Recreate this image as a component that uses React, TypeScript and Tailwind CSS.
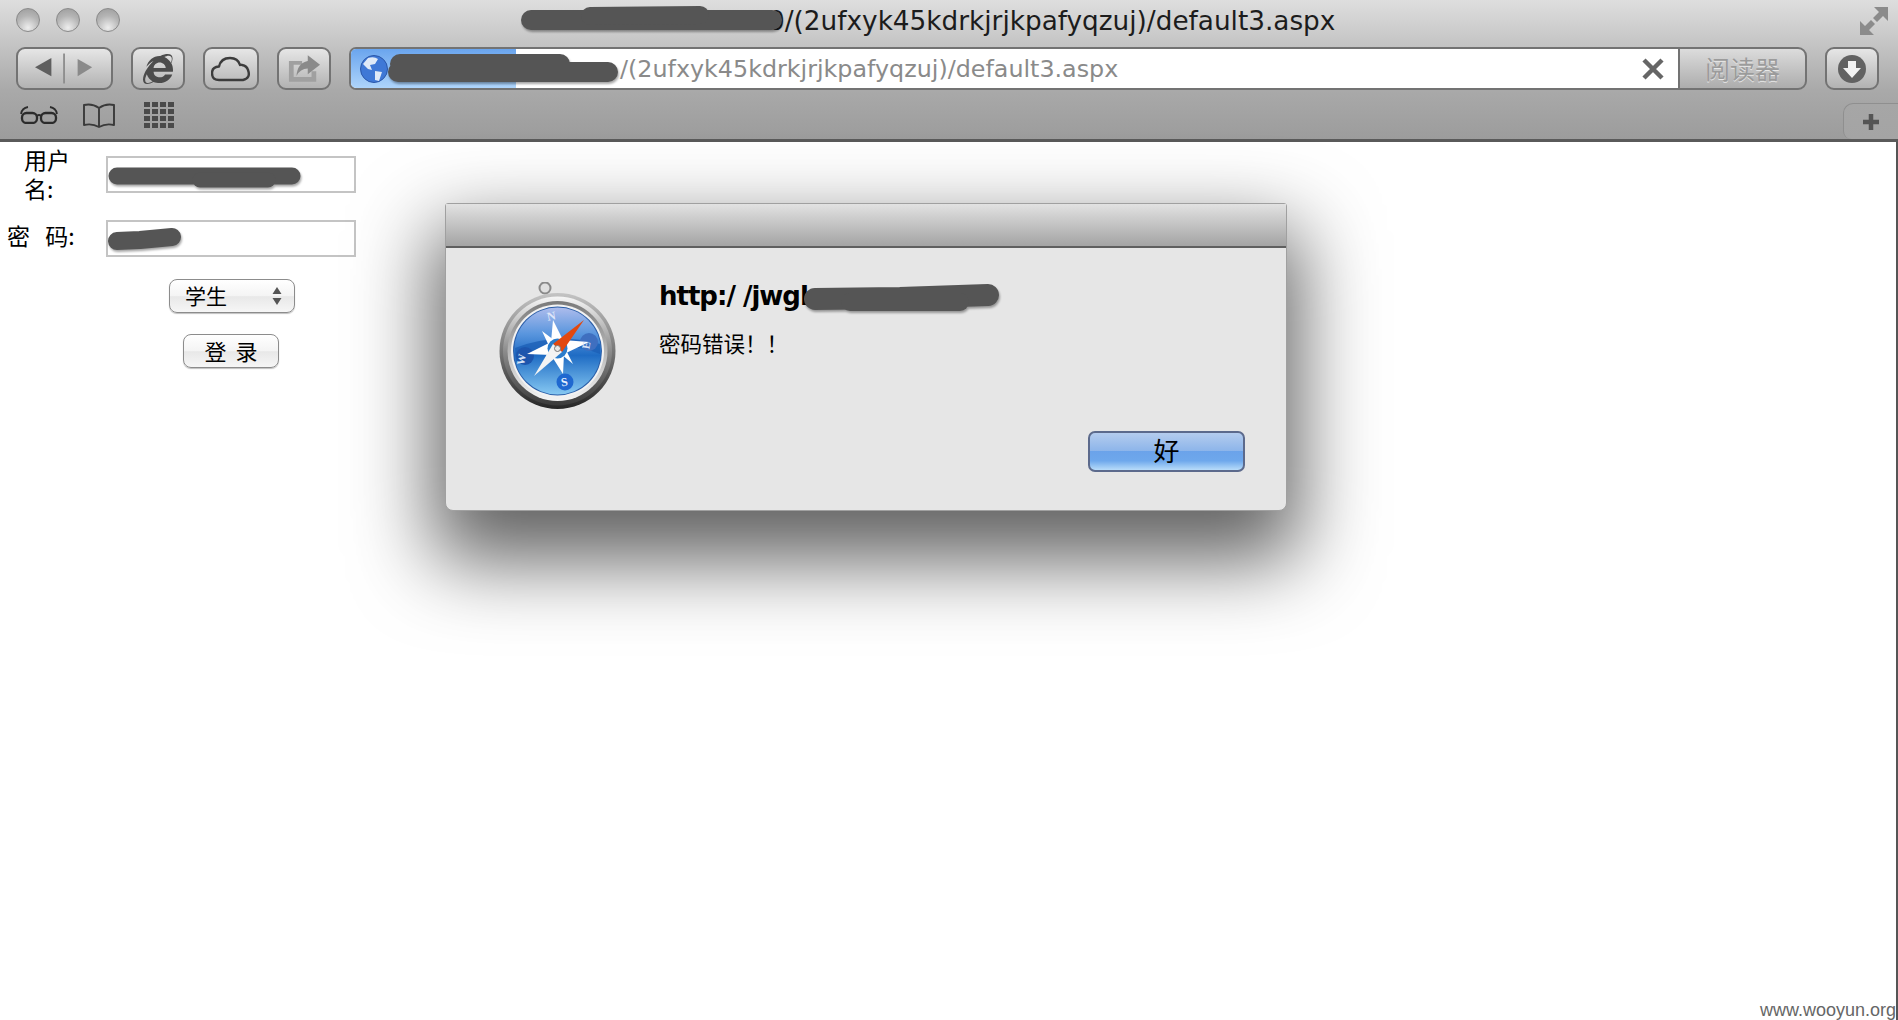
import { FaInternetExplorer } from 'react-icons/fa';
import type { ReactNode } from 'react';

const cjk = "font-['Noto_Sans_CJK_SC','Noto_Sans',sans-serif]";

const ToolButton = ({ className, children }: { className: string; children: ReactNode }) => (
  <div className={`h-[43px] flex items-center justify-center rounded-[9px] border-2 border-[#737373] bg-gradient-to-b from-[#e6e6e6] to-[#b2b2b2] ${className}`}>
    {children}
  </div>
);

const TrafficLight = () => (
  <div className="w-[24px] h-[24px] rounded-full border border-[#8a8a8a] bg-[radial-gradient(circle_at_50%_85%,#eeeeee_0%,#b5b5b5_55%,#9a9a9a_100%)]" />
);

const SafariIcon = () => (
  <svg viewBox="0 0 118 128" className="w-[118px] h-[128px] shrink-0">
    <defs>
      <linearGradient id="ring1" x1="0" y1="0" x2="0" y2="1">
        <stop offset="0" stopColor="#c4c4c4" />
        <stop offset="0.5" stopColor="#777777" />
        <stop offset="1" stopColor="#262626" />
      </linearGradient>
      <linearGradient id="ring2" x1="0" y1="0" x2="0" y2="1">
        <stop offset="0" stopColor="#f6f6f6" />
        <stop offset="0.5" stopColor="#8c8c8c" />
        <stop offset="1" stopColor="#3a3a3a" />
      </linearGradient>
      <linearGradient id="ring3" x1="0" y1="0" x2="0" y2="1">
        <stop offset="0" stopColor="#7a7a7a" />
        <stop offset="1" stopColor="#f4f4f4" />
      </linearGradient>
      <linearGradient id="disc" x1="0" y1="0" x2="0" y2="1">
        <stop offset="0" stopColor="#adbcec" />
        <stop offset="0.3" stopColor="#5a96de" />
        <stop offset="0.55" stopColor="#1f6cc4" />
        <stop offset="1" stopColor="#86c8f2" />
      </linearGradient>
    </defs>
    <circle cx="46" cy="6" r="5.5" fill="#e0e0e0" stroke="#8a8a8a" strokeWidth="2" />
    <circle cx="58.5" cy="69" r="58" fill="url(#ring1)" />
    <circle cx="58.5" cy="69" r="54.5" fill="url(#ring2)" />
    <circle cx="58.5" cy="69" r="50" fill="url(#ring3)" />
    <circle cx="58.5" cy="69" r="46.5" fill="#f2f2f2" />
    <circle cx="58.5" cy="69" r="44.5" fill="#2a5ea8" />
    <circle cx="58.5" cy="69" r="43.5" fill="url(#disc)" />
    <path d="M16 66 Q58 50 101 62 L101 72 Q70 60 40 68 Q24 72 17 80 Z" fill="#1b5eb4" opacity="0.75" />
    <circle cx="26" cy="74" r="9" fill="#1d55ad" />
    <circle cx="90" cy="60" r="9" fill="#3f6fc0" />
    <circle cx="66" cy="100" r="8.5" fill="#1f68d0" />
    <path d="M54 38 L64 58 L90 60 L65 72 L64 92 L52 73 L28 72 L52 60 Z" fill="#ffffff" />
    <path d="M43 49 L55 58 L50 64 Z M74 50 L62 58 L66 64 Z M74 82 L62 72 L67 68 Z M43 84 L55 72 L50 68 Z" fill="#ffffff" />
    <circle cx="58.5" cy="66.5" r="10" fill="#2a7ccc" />
    <path d="M85 38 L63 70 L54 62 Z" fill="#e2480f" />
    <path d="M35 94 L54 62 L63 70 Z" fill="#f3f3f3" />
    <circle cx="58.5" cy="66.5" r="3" fill="#e8e8e8" stroke="#777777" />
    <text x="53" y="38" textAnchor="middle" fontSize="12" fontWeight="700" fill="#dfe6f8" fontFamily="'Liberation Serif',serif" transform="rotate(-10 53 38)">N</text>
    <text x="66" y="104" textAnchor="middle" fontSize="12" fontWeight="700" fill="#e6f0ff" fontFamily="'Liberation Serif',serif" transform="rotate(-10 66 104)">S</text>
    <text x="91" y="64" textAnchor="middle" fontSize="11" fontWeight="700" fill="#d9e4f7" fontFamily="'Liberation Serif',serif" transform="rotate(-80 91 64)">E</text>
    <text x="26" y="78" textAnchor="middle" fontSize="11" fontWeight="700" fill="#d9e4f7" fontFamily="'Liberation Serif',serif" transform="rotate(-80 26 78)">W</text>
  </svg>
);

export default function App() {
  return (
    <div className={`relative w-full h-[1020px] overflow-hidden bg-white flex flex-col ${cjk}`}>
      {/* browser chrome */}
      <header className="h-[142px] shrink-0 border-b-[3px] border-[#5a5a5a] bg-[linear-gradient(#dedede_0%,#c6c6c6_30%,#a9a9a9_65%,#9c9c9c_100%)] flex flex-col relative">
        <div className="h-[47px] shrink-0 flex items-start pt-[8px] pl-[16px]">
          <div className="flex gap-[16px]">
            <TrafficLight />
            <TrafficLight />
            <TrafficLight />
          </div>
          <div className="ml-[648px] text-[26.3px] leading-[26px] text-[#1c1c1c] whitespace-nowrap font-['DejaVu_Sans',sans-serif]">
            0/(2ufxyk45kdrkjrjkpafyqzuj)/default3.aspx
          </div>
          <svg viewBox="0 0 28 28" className="ml-auto mr-[10px] -mt-[1px] w-[28px] h-[28px] shrink-0">
            <path d="M14 0 H28 V14 L23 9 L17 15 L13 11 L19 5 Z M0 14 L5 19 L11 13 L15 17 L9 23 L14 28 H0 Z" fill="#8b8b8b" />
          </svg>
        </div>

        <div className="h-[43px] shrink-0 flex items-center pl-[16px]">
          <ToolButton className="w-[97px]">
            <svg viewBox="0 0 97 43" className="w-full h-full">
              <path d="M34 10 V30 L16 20 Z" fill="#5f5f5f" />
              <rect x="47" y="5" width="2" height="33" fill="#8d8d8d" />
              <path d="M63 11 V30 L79 20 Z" fill="#8a8a8a" />
            </svg>
          </ToolButton>
          <ToolButton className="w-[54px] ml-[18px]">
            <FaInternetExplorer className="w-[30px] h-[30px] text-[#4c4c4c]" />
          </ToolButton>
          <ToolButton className="w-[56px] ml-[18px]">
            <svg viewBox="0 0 40 26" className="w-[40px] h-[26px]">
              <path d="M8 24 Q1 24 1 17 Q1 11 8 10.5 Q10 2 19 2 Q27 2 29 9 Q30 8.5 31 9 Q36 10 37 14 Q40 22 32 24 Z" fill="none" stroke="#3c3c3c" strokeWidth="2.4" strokeLinejoin="round" />
            </svg>
          </ToolButton>
          <ToolButton className="w-[54px] ml-[18px]">
            <svg viewBox="0 0 34 28" className="w-[32px] h-[27px]">
              <path d="M1 6 H15 V10 H6 V23 H25 V17 H30 V28 H1 Z" fill="#a0a0a0" />
              <path d="M21 0 L34 10 L21 20 V14 Q13 14 9 22 Q10 8 21 6 Z" fill="#8a8a8a" />
            </svg>
          </ToolButton>

          <div className="relative ml-[18px] flex-1 h-[43px] flex items-center bg-white border-y-2 border-l-2 border-[#737373] rounded-l-[7px] overflow-hidden">
            <div className="absolute left-0 top-0 bottom-0 w-[165px] bg-gradient-to-b from-[#6aa5ee] to-[#aed4fa]" />
            <svg viewBox="0 0 28 28" className="relative ml-[9px] w-[28px] h-[28px] shrink-0">
              <circle cx="14" cy="14" r="13.5" fill="#3f78d6" stroke="#2b57a8" />
              <path d="M8 3 Q14 1 18 4 L15 9 L10 10 L12 15 L8 14 L3 9 Z M15 16 L22 17 L19 26 L15 25 Z" fill="#dfe9f7" />
            </svg>
            <span className="relative ml-[232px] mt-[2px] text-[23.8px] text-[#8a8a8a] whitespace-nowrap font-['DejaVu_Sans',sans-serif]">
              /(2ufxyk45kdrkjrjkpafyqzuj)/default3.aspx
            </span>
            <svg viewBox="0 0 22 22" className="relative ml-auto mr-[14px] w-[22px] h-[22px] shrink-0">
              <path d="M2 2 L20 20 M20 2 L2 20" stroke="#666666" strokeWidth="4.5" />
            </svg>
          </div>
          <div className="w-[129px] h-[43px] flex items-center justify-center border-2 border-[#737373] rounded-r-[9px] bg-gradient-to-b from-[#dcdcdc] to-[#adadad] text-[25px] text-[#9b9b9b] [text-shadow:0_1px_0_#e8e8e8]">
            阅读器
          </div>
          <ToolButton className="w-[54px] ml-[18px] mr-[19px]">
            <svg viewBox="0 0 28 28" className="w-[28px] h-[28px]">
              <circle cx="14" cy="14" r="14" fill="#626262" />
              <path d="M10 6 H18 V13 H23 L14 23 L5 13 H10 Z" fill="#f2f2f2" />
            </svg>
          </ToolButton>
        </div>

        <div className="flex-1 flex items-center pl-[20px] pt-[1px] text-[#333333]">
          <svg viewBox="0 0 38 18" className="w-[38px] h-[18px]">
            <path d="M1 8 Q2 2 8 1 M37 8 Q36 2 30 1" fill="none" stroke="#2c2c2c" strokeWidth="1.8" />
            <rect x="2" y="7" width="15" height="10" rx="4.5" fill="none" stroke="#2c2c2c" strokeWidth="2.3" />
            <rect x="21" y="7" width="15" height="10" rx="4.5" fill="none" stroke="#2c2c2c" strokeWidth="2.3" />
            <path d="M17 10 Q19 8 21 10" fill="none" stroke="#2c2c2c" strokeWidth="1.8" />
          </svg>
          <svg viewBox="0 0 34 25" className="ml-[24px] w-[34px] h-[25px]">
            <path d="M17 5 Q10 0 2 2 V22 Q10 20 17 24 Q24 20 32 22 V2 Q24 0 17 5 V24" fill="none" stroke="#3a3a3a" strokeWidth="1.9" strokeLinejoin="round" />
          </svg>
          <div className="ml-[28px] grid grid-cols-4 gap-[2px]">
            {Array.from({ length: 16 }).map((_, i) => (
              <div key={i} className="w-[6px] h-[5px] bg-[#4a4a4a]" />
            ))}
          </div>
          <div className="ml-auto self-end w-[55px] h-[36px] rounded-tl-[10px] rounded-bl-[8px] border-l border-t border-[#8f8f8f] bg-gradient-to-b from-[#a6a6a6] to-[#a4a4a4] flex items-center justify-center">
            <svg viewBox="0 0 16 16" className="w-[16px] h-[16px]">
              <path d="M8 0 V16 M0 8 H16" stroke="#555555" strokeWidth="4.5" />
            </svg>
          </div>
        </div>
      </header>

      {/* login form */}
      <main className="flex-1 flex flex-col border-r-2 border-[#555555] pt-[14px] text-[23px] text-black">
        <div className="h-[37px] flex items-center">
          <div className="w-[106px] shrink-0 pl-[24px] pr-[32px] -mt-[2px] leading-[29px]">用户名:</div>
          <div className="w-[250px] h-[37px] border-2 border-[#c4c4c4]" />
        </div>
        <div className="h-[37px] mt-[27px] flex items-center">
          <div className="w-[106px] shrink-0 pl-[7px] -mt-[6px] whitespace-pre [word-spacing:10px]">密 码:</div>
          <div className="w-[250px] h-[37px] border-2 border-[#c4c4c4]" />
        </div>
        <div className="w-[250px] ml-[107px] mt-[22px] flex justify-center">
          <div className="w-[126px] h-[34px] pl-[15px] pr-[12px] flex items-center justify-between rounded-[8px] border border-[#8c8c8c] bg-[linear-gradient(#ffffff_0%,#f4f4f4_50%,#e8e8e8_52%,#f6f6f6_100%)] shadow-[0_1px_1px_rgba(0,0,0,0.25)]">
            <span className="text-[21px] leading-none -mt-[2px]">学生</span>
            <svg viewBox="0 0 10 18" className="w-[10px] h-[18px]">
              <path d="M5 0 L9.5 7 H0.5 Z M5 18 L9.5 11 H0.5 Z" fill="#555555" />
            </svg>
          </div>
        </div>
        <div className="w-[250px] ml-[106px] mt-[21px] flex justify-center">
          <div className="w-[96px] h-[34px] flex items-center justify-center rounded-[8px] border border-[#8c8c8c] bg-[linear-gradient(#ffffff_0%,#f4f4f4_50%,#e8e8e8_52%,#f6f6f6_100%)] shadow-[0_1px_1px_rgba(0,0,0,0.25)] text-[22px] leading-none whitespace-pre [word-spacing:4px]">
            <span className="-mt-[2px]">登 录</span>
          </div>
        </div>
      </main>

      {/* alert sheet */}
      <div className="absolute left-[445px] top-[203px] w-[842px] h-[308px] flex flex-col rounded-b-[8px] rounded-t-[3px] border border-[#a0a0a0] bg-[#e6e6e6] shadow-[0_38px_80px_12px_rgba(0,0,0,0.62)]">
        <div className="h-[44px] shrink-0 border-b-2 border-[#5f5f5f] bg-gradient-to-b from-[#e2e2e2] to-[#a4a4a4]" />
        <div className="flex-1 flex pl-[53px] pt-[34px] pr-[41px] pb-[38px]">
          <SafariIcon />
          <div className="ml-[42px] flex-1 flex flex-col">
            <div className="text-[26px] leading-[34px] -mt-[3px] font-bold text-black font-['DejaVu_Sans',sans-serif] tracking-[-1px]">http:/ /jwgl</div>
            <div className="text-[21.5px] leading-[30px] mt-[15px] text-black">{'密码错误\uFF01\uFF01'}</div>
            <div className="mt-auto self-end w-[157px] h-[41px] flex items-center justify-center rounded-[7px] border-2 border-[#5c6a8c] bg-[linear-gradient(#b4ccee_0%,#8db5ea_48%,#6ba3ea_50%,#6ea8ec_75%,#b8dcfa_100%)] text-[26px] leading-none text-black">
              <span className="-mt-[3px]">好</span>
            </div>
          </div>
        </div>
      </div>

      {/* scribbles over redacted parts */}
      <svg viewBox="0 0 1898 1020" className="absolute inset-0 w-[1898px] h-[1020px] pointer-events-none drop-shadow-[1px_2px_1px_rgba(0,0,0,0.35)]">
        <g fill="none" stroke="#555555" strokeLinecap="round" strokeLinejoin="round">
          <path d="M531 20 H772" strokeWidth="20" />
          <path d="M590 16 L700 15" strokeWidth="18" />
          <path d="M400 64 H560 M398 72 H608" strokeWidth="20" />
          <path d="M117 176 H292" strokeWidth="17" />
          <path d="M200 180 H268" strokeWidth="15" />
          <path d="M117 241 L140 240 L172 237" strokeWidth="18" />
          <path d="M815 299 L900 298 L988 295" strokeWidth="22" />
          <path d="M850 302 H960" strokeWidth="18" />
        </g>
      </svg>

      <div className="absolute right-[2px] bottom-0 text-[18px] leading-[20px] text-[#666666] font-['Liberation_Sans',sans-serif]">
        www.wooyun.org
      </div>
    </div>
  );
}
